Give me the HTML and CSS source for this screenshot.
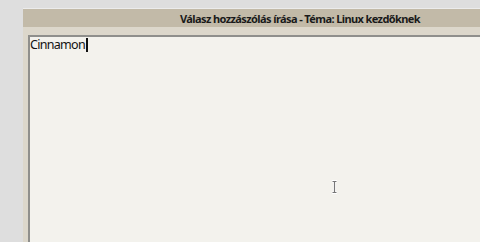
FILE: index.html
```html
<!DOCTYPE html>
<html>
<head>
<meta charset="utf-8">
<link rel="stylesheet" href="styles.css">
</head>
<body>
<div class="desk">
  <div class="window">
    <div class="titlebar"><span class="title">Válasz hozzászólás írása - Téma: Linux kezdőknek</span></div>
    <div class="frame">
      <div class="editor">
        <div class="text">Cinnamon<span class="caret"></span></div>
        <svg class="ibeam" width="7" height="14" viewBox="0 0 7 14">
          <path d="M1 1h5M1 13h5M3.5 1v12" stroke="#ffffff" stroke-width="3" fill="none"/>
          <path d="M1.5 1.5h4M1.5 12.5h4M3.5 1.5v11" stroke="#777" stroke-width="1.2" fill="none"/>
        </svg>
      </div>
    </div>
  </div>
</div>
</body>
</html>
```
FILE: styles.css
```css
html, body {
  margin: 0;
  padding: 0;
}
body {
  width: 480px;
  height: 242px;
  overflow: hidden;
  background: #dedede;
}
.desk {
  padding: 8px 0 0 23px;
  height: 234px;
}
.window {
  height: 100%;
  border-top: 1px solid #ececec;
  display: flex;
  flex-direction: column;
  background: #dcd7cb;
}
.titlebar {
  height: 18px;
  background: #c2baa8;
  display: flex;
  align-items: center;
  padding-left: 157px;
}
.title {
  font-family: "Noto Sans", sans-serif;
  font-weight: bold;
  font-size: 11px;
  letter-spacing: -0.6px;
  color: #1a1a1a;
  white-space: nowrap;
}
.frame {
  flex: 1;
  padding: 8px 0 0 5px;
}
.editor {
  position: relative;
  height: 100%;
  background: #f3f2ed;
  border-top: 2px solid #8f8f8c;
  border-left: 2px solid #8f8f8c;
  box-sizing: border-box;
}
.text {
  font-family: "Noto Sans", sans-serif;
  font-size: 12.5px;
  letter-spacing: -0.7px;
  color: #111;
  padding: 1px 0 0 0;
  line-height: 14px;
  display: flex;
  align-items: center;
}
.caret {
  display: inline-block;
  width: 2px;
  height: 14px;
  background: #111;
  margin-left: 1px;
}
.ibeam {
  position: absolute;
  left: 301px;
  top: 143px;
}
```
